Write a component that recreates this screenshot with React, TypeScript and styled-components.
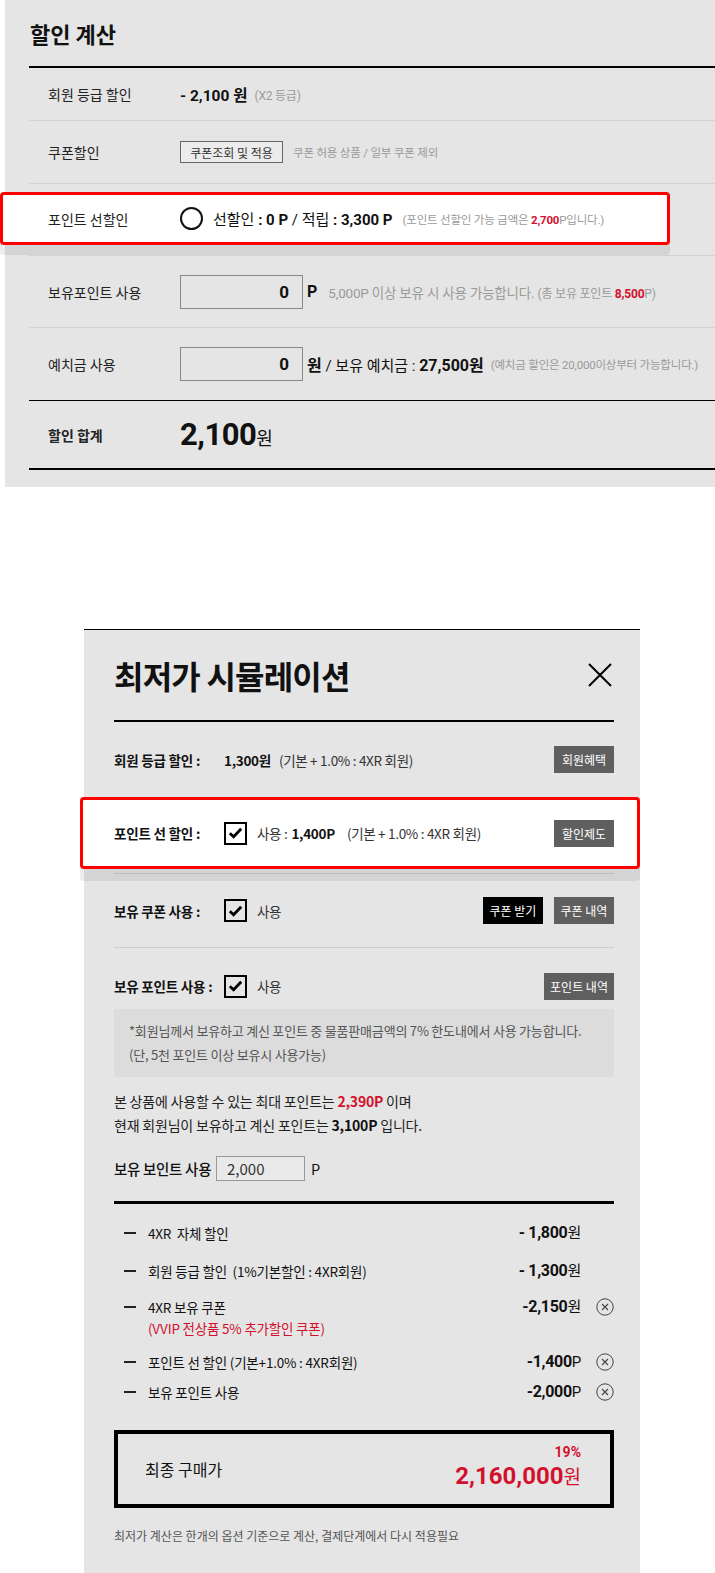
import styled, { createGlobalStyle } from 'styled-components';

const GlobalStyle = createGlobalStyle`
  * { box-sizing: border-box; }
  body {
    margin: 0;
    background: #fff;
    color: #111;
    font-family: 'Noto Sans CJK KR', 'Noto Sans', sans-serif;
  }
`;

const NUM_FONT = `Roboto, 'Noto Sans CJK KR', sans-serif`;
const RED = '#d3112d';

const Page = styled.div`
  width: 715px;
`;

/* ---------- top: 할인 계산 ---------- */

const CalcSection = styled.section`
  margin-left: 5px;
  height: 487px;
  background: #e5e5e5;
  padding-left: 24px;
`;

const CalcTitle = styled.h2`
  margin: 0;
  height: 68px;
  padding-left: 1px;
  display: flex;
  align-items: center;
  font-size: 22px;
  font-weight: 700;
  border-bottom: 2px solid #000;
`;

const lines = {
  light: '1px solid #d2d2d2',
  dark: '1px solid #000',
  heavy: '2px solid #000',
};

const CalcRow = styled.div<{ $h: number; $line?: keyof typeof lines }>`
  display: flex;
  align-items: center;
  height: ${(p) => p.$h}px;
  padding-left: 19px;
  border-bottom: ${(p) => lines[p.$line || 'light']};
  white-space: nowrap;
`;

const CalcSpotRow = styled(CalcRow)`
  align-items: flex-start;
  padding: 8px 0 0;
`;

const CalcSpot = styled.div`
  display: flex;
  align-items: center;
  margin-left: -29px;
  width: 670px;
  height: 53px;
  padding-left: 45px;
  background: #fff;
  border: 3px solid #f00;
  border-radius: 4px;
  box-shadow: 0 10px 0 rgba(0, 0, 0, 0.07);
`;

const CalcLabel = styled.div<{ $bold?: boolean }>`
  width: 132px;
  flex-shrink: 0;
  font-size: 14px;
  font-weight: ${(p) => (p.$bold ? 700 : 400)};
  color: #222;
`;

const Amount = styled.span`
  font-family: ${NUM_FONT};
  font-size: 15.5px;
  font-weight: 700;
`;

const Hint = styled.span<{ $size?: number; $gap?: number }>`
  margin-left: ${(p) => (p.$gap === undefined ? 7 : p.$gap)}px;
  font-family: ${NUM_FONT};
  font-size: ${(p) => p.$size || 11.5}px;
  letter-spacing: -0.2px;
  color: #9a9a9a;
  white-space: nowrap;
`;

const Red = styled.b`
  color: ${RED};
  font-weight: 700;
`;

const OutlineButton = styled.button`
  height: 22px;
  width: 103px;
  padding: 0;
  border: 1px solid #666;
  background: #ececec;
  font-family: inherit;
  font-size: 12px;
  color: #333;
`;

const Radio = styled.span`
  width: 23px;
  height: 23px;
  border: 2px solid #111;
  border-radius: 50%;
  margin-right: 10px;
  flex-shrink: 0;
`;

const SpotText = styled.span`
  font-family: ${NUM_FONT};
  font-size: 15px;
  color: #111;
  white-space: nowrap;
  b { font-weight: 700; }
`;

const NumberBox = styled.input`
  width: 123px;
  height: 34px;
  padding: 0 13px 0 0;
  border: 1px solid #888;
  background: transparent;
  text-align: right;
  font-family: ${NUM_FONT};
  font-size: 17px;
  font-weight: 700;
  color: #111;
  outline: none;
`;

const Unit = styled.span`
  margin-left: 4px;
  font-family: ${NUM_FONT};
  font-size: 15px;
  color: #111;
  white-space: nowrap;
  b { font-weight: 700; font-size: 16px; }
`;

const Total = styled.span`
  font-family: ${NUM_FONT};
  font-size: 31px;
  font-weight: 700;
  letter-spacing: -0.5px;
  small { font-size: 18px; font-weight: 400; letter-spacing: 0; }
`;

/* ---------- bottom: 최저가 시뮬레이션 ---------- */

const SimPanel = styled.section`
  margin: 142px 0 0 84px;
  width: 556px;
  background: #e5e5e5;
  border-top: 1px solid #000;
  padding: 0 26px 28px 30px;
`;

const SimHeader = styled.header`
  display: flex;
  align-items: center;
  justify-content: space-between;
  height: 92px;
  border-bottom: 2px solid #000;
`;

const SimTitle = styled.h2`
  margin: 0;
  font-size: 32px;
  font-weight: 700;
  letter-spacing: -0.8px;
`;

const CloseButton = styled.button`
  width: 24px;
  height: 24px;
  margin-right: 2px;
  padding: 0;
  border: 0;
  background: none;
`;

const SimRow = styled.div<{ $h: number; $pt?: number; $line?: boolean }>`
  display: flex;
  align-items: center;
  height: ${(p) => p.$h}px;
  padding-top: ${(p) => p.$pt || 0}px;
  border-bottom: ${(p) => (p.$line ? '1px solid #cdcdcd' : 'none')};
  font-size: 13.5px;
`;

const SimSpotRow = styled(SimRow)`
  align-items: flex-start;
`;

const SimSpot = styled.div`
  display: flex;
  align-items: center;
  flex: 1;
  height: 72px;
  margin: 0 -26px 0 -34px;
  padding: 0 23px 0 31px;
  background: #fff;
  border: 3px solid #f00;
  border-radius: 4px;
  box-shadow: 0 12px 0 rgba(0, 0, 0, 0.07);
`;

const SimLabel = styled.div`
  width: 110px;
  flex-shrink: 0;
  font-weight: 700;
  letter-spacing: -0.2px;
  color: #111;
  white-space: nowrap;
`;

const SimValue = styled.div`
  flex: 1;
  display: flex;
  align-items: center;
  color: #333;
  letter-spacing: -0.3px;
  white-space: nowrap;
  b { font-weight: 700; color: #111; }
`;

const Gap = styled.span<{ $w: number }>`
  display: inline-block;
  width: ${(p) => p.$w}px;
`;

const CheckBox = styled.span`
  display: flex;
  align-items: center;
  justify-content: center;
  width: 23px;
  height: 23px;
  border: 2px solid #000;
  margin-right: 10px;
  flex-shrink: 0;
`;

const ButtonGroup = styled.div`
  display: flex;
  gap: 11px;
`;

const TagButton = styled.button<{ $w: number; $dark?: boolean }>`
  width: ${(p) => p.$w}px;
  height: 27px;
  padding: 0;
  border: 0;
  background: ${(p) => (p.$dark ? '#000' : '#5f5f5f')};
  color: #fff;
  font-family: inherit;
  font-size: 12px;
  white-space: nowrap;
`;

const Notice = styled.div`
  padding: 10px 16px 10px 15px;
  background: #dcdcdc;
  font-size: 13px;
  line-height: 24px;
  letter-spacing: -0.2px;
  color: #555;
`;

const InfoText = styled.p`
  margin: 12px 0 0;
  font-size: 14px;
  line-height: 24px;
  letter-spacing: -0.2px;
  color: #222;
  b { font-weight: 700; color: #111; }
  b.red { color: ${RED}; }
`;

const UseRow = styled.div`
  display: flex;
  align-items: center;
  height: 25px;
  margin-top: 19px;
  font-size: 14.5px;
  color: #111;
  white-space: nowrap;
`;

const UseLabel = styled.span`
  width: 102px;
  flex-shrink: 0;
  font-weight: 500;
  letter-spacing: -0.3px;
`;

const UseInput = styled.input`
  width: 89px;
  height: 25px;
  padding: 0 0 0 10px;
  border: 1px solid #999;
  background: #e9e9e9;
  font-family: inherit;
  font-size: 15px;
  color: #333;
  outline: none;
`;

const UseUnit = styled.span`
  margin-left: 6px;
`;

const Breakdown = styled.ul`
  list-style: none;
  margin: 20px 0 0;
  padding: 0;
  border-top: 3px solid #000;
`;

const BreakItem = styled.li<{ $gap: number }>`
  display: flex;
  align-items: flex-start;
  margin-top: ${(p) => p.$gap}px;
  font-size: 13.5px;
  line-height: 22px;
  letter-spacing: -0.2px;
  color: #111;
`;

const Dash = styled.span`
  width: 12px;
  height: 2px;
  margin: 10px 12px 0 10px;
  background: #222;
  flex-shrink: 0;
`;

const BreakText = styled.div`
  flex: 1;
  white-space: pre;
`;

const SubNote = styled.div`
  color: ${RED};
  line-height: 21px;
`;

const BreakAmount = styled.span`
  font-family: ${NUM_FONT};
  font-size: 16px;
  font-weight: 700;
  letter-spacing: -0.3px;
  white-space: nowrap;
  small { font-size: 15px; font-weight: 400; }
`;

const RemoveSlot = styled.span`
  display: flex;
  justify-content: flex-end;
  align-items: center;
  width: 33px;
  height: 22px;
  flex-shrink: 0;
`;

const FinalBox = styled.div`
  display: flex;
  align-items: center;
  justify-content: space-between;
  height: 78px;
  margin-top: 27px;
  padding: 0 29px 0 27px;
  border: 4px solid #000;
`;

const FinalLabel = styled.span`
  font-size: 16px;
  color: #111;
`;

const FinalPrice = styled.div`
  display: flex;
  flex-direction: column;
  align-items: flex-end;
  color: ${RED};
  font-family: ${NUM_FONT};
`;

const Rate = styled.span`
  font-size: 14px;
  font-weight: 700;
  line-height: 16px;
`;

const Price = styled.span`
  font-size: 24px;
  font-weight: 700;
  line-height: 32px;
  small { font-size: 19px; font-weight: 400; }
`;

const Footnote = styled.p`
  margin: 19px 0 0;
  font-size: 12px;
  line-height: 18px;
  color: #555;
`;

function CheckMark() {
  return (
    <svg width="15" height="12" viewBox="0 0 15 12">
      <path d="M1.8 6.2 L5.6 9.8 L13.2 1.8" fill="none" stroke="#000" strokeWidth="2.8" />
    </svg>
  );
}

function RemoveIcon() {
  return (
    <svg width="18" height="18" viewBox="0 0 18 18">
      <circle cx="9" cy="9" r="8.2" fill="none" stroke="#444" strokeWidth="1" />
      <path d="M6 6 L12 12 M12 6 L6 12" stroke="#444" strokeWidth="1.1" />
    </svg>
  );
}

const breakdown = [
  { gap: 18, text: '4XR  자체 할인', amount: '- 1,800', unit: '원' },
  { gap: 16, text: '회원 등급 할인  (1%기본할인 : 4XR회원)', amount: '- 1,300', unit: '원' },
  { gap: 14, text: '4XR 보유 쿠폰', sub: '(VVIP 전상품 5% 추가할인 쿠폰)', amount: '-2,150', unit: '원', remove: true },
  { gap: 12, text: '포인트 선 할인 (기본+1.0% : 4XR회원)', amount: '-1,400', unit: 'P', remove: true },
  { gap: 8, text: '보유 포인트 사용', amount: '-2,000', unit: 'P', remove: true },
];

export default function App() {
  return (
    <Page>
      <GlobalStyle />

      <CalcSection>
        <CalcTitle>할인 계산</CalcTitle>

        <CalcRow $h={53}>
          <CalcLabel>회원 등급 할인</CalcLabel>
          <Amount>- 2,100 원</Amount>
          <Hint $size={12}>(X2 등급)</Hint>
        </CalcRow>

        <CalcRow $h={63}>
          <CalcLabel>쿠폰할인</CalcLabel>
          <OutlineButton>쿠폰조회 및 적용</OutlineButton>
          <Hint $gap={10}>쿠폰 허용 상품 / 일부 쿠폰 제외</Hint>
        </CalcRow>

        <CalcSpotRow $h={72}>
          <CalcSpot>
            <CalcLabel>포인트 선할인</CalcLabel>
            <Radio />
            <SpotText>
              선할인 <b>: 0 P</b> / 적립 <b>: 3,300 P</b>
            </SpotText>
            <Hint $gap={10}>
              (포인트 선할인 가능 금액은 <Red>2,700</Red>P입니다.)
            </Hint>
          </CalcSpot>
        </CalcSpotRow>

        <CalcRow $h={72}>
          <CalcLabel>보유포인트 사용</CalcLabel>
          <NumberBox readOnly value="0" />
          <Unit>
            <b>P</b>
          </Unit>
          <Hint $size={13.5} $gap={11}>
            5,000P 이상 보유 시 사용 가능합니다.{' '}
            <Hint $size={12} $gap={0}>
              (총 보유 포인트 <Red>8,500</Red>P)
            </Hint>
          </Hint>
        </CalcRow>

        <CalcRow $h={73} $line="dark">
          <CalcLabel>예치금 사용</CalcLabel>
          <NumberBox readOnly value="0" />
          <Unit>
            <b>원</b> / 보유 예치금 : <b>27,500원</b>
          </Unit>
          <Hint>(예치금 할인은 20,000이상부터 가능합니다.)</Hint>
        </CalcRow>

        <CalcRow $h={69} $line="heavy">
          <CalcLabel $bold>할인 합계</CalcLabel>
          <Total>
            2,100<small>원</small>
          </Total>
        </CalcRow>
      </CalcSection>

      <SimPanel>
        <SimHeader>
          <SimTitle>최저가 시뮬레이션</SimTitle>
          <CloseButton aria-label="닫기">
            <svg width="24" height="24" viewBox="0 0 24 24">
              <path d="M1 1 L23 23 M23 1 L1 23" stroke="#000" strokeWidth="2" />
            </svg>
          </CloseButton>
        </SimHeader>

        <SimRow $h={75}>
          <SimLabel>회원 등급 할인 :</SimLabel>
          <SimValue>
            <b>1,300원</b>
            <Gap $w={8} />
            (기본 + 1.0% : 4XR 회원)
          </SimValue>
          <TagButton $w={60}>회원혜택</TagButton>
        </SimRow>

        <SimSpotRow $h={77} $line>
          <SimSpot>
            <SimLabel>포인트 선 할인 :</SimLabel>
            <SimValue>
              <CheckBox>
                <CheckMark />
              </CheckBox>
              사용 : <Gap $w={4} />
              <b>1,400P</b>
              <Gap $w={12} />
              (기본 + 1.0% : 4XR 회원)
            </SimValue>
            <TagButton $w={60}>할인제도</TagButton>
          </SimSpot>
        </SimSpotRow>

        <SimRow $h={74} $line>
          <SimLabel>보유 쿠폰 사용 :</SimLabel>
          <SimValue>
            <CheckBox>
              <CheckMark />
            </CheckBox>
            사용
          </SimValue>
          <ButtonGroup>
            <TagButton $w={60} $dark>
              쿠폰 받기
            </TagButton>
            <TagButton $w={60}>쿠폰 내역</TagButton>
          </ButtonGroup>
        </SimRow>

        <SimRow $h={61} $pt={15}>
          <SimLabel>보유 포인트 사용 :</SimLabel>
          <SimValue>
            <CheckBox>
              <CheckMark />
            </CheckBox>
            사용
          </SimValue>
          <TagButton $w={70}>포인트 내역</TagButton>
        </SimRow>

        <Notice>
          *회원님께서 보유하고 계신 포인트 중 물품판매금액의 7% 한도내에서 사용 가능합니다.
          <br />
          (단, 5천 포인트 이상 보유시 사용가능)
        </Notice>

        <InfoText>
          본 상품에 사용할 수 있는 최대 포인트는 <b className="red">2,390P</b> 이며
          <br />
          현재 회원님이 보유하고 계신 포인트는 <b>3,100P</b> 입니다.
        </InfoText>

        <UseRow>
          <UseLabel>보유 보인트 사용</UseLabel>
          <UseInput readOnly value="2,000" />
          <UseUnit>P</UseUnit>
        </UseRow>

        <Breakdown>
          {breakdown.map((item) => (
            <BreakItem key={item.text} $gap={item.gap}>
              <Dash />
              <BreakText>
                {item.text}
                {item.sub && <SubNote>{item.sub}</SubNote>}
              </BreakText>
              <BreakAmount>
                {item.amount}
                <small>{item.unit}</small>
              </BreakAmount>
              <RemoveSlot>{item.remove && <RemoveIcon />}</RemoveSlot>
            </BreakItem>
          ))}
        </Breakdown>

        <FinalBox>
          <FinalLabel>최종 구매가</FinalLabel>
          <FinalPrice>
            <Rate>19%</Rate>
            <Price>
              2,160,000<small>원</small>
            </Price>
          </FinalPrice>
        </FinalBox>

        <Footnote>최저가 계산은 한개의 옵션 기준으로 계산, 결제단계에서 다시 적용필요</Footnote>
      </SimPanel>
    </Page>
  );
}
